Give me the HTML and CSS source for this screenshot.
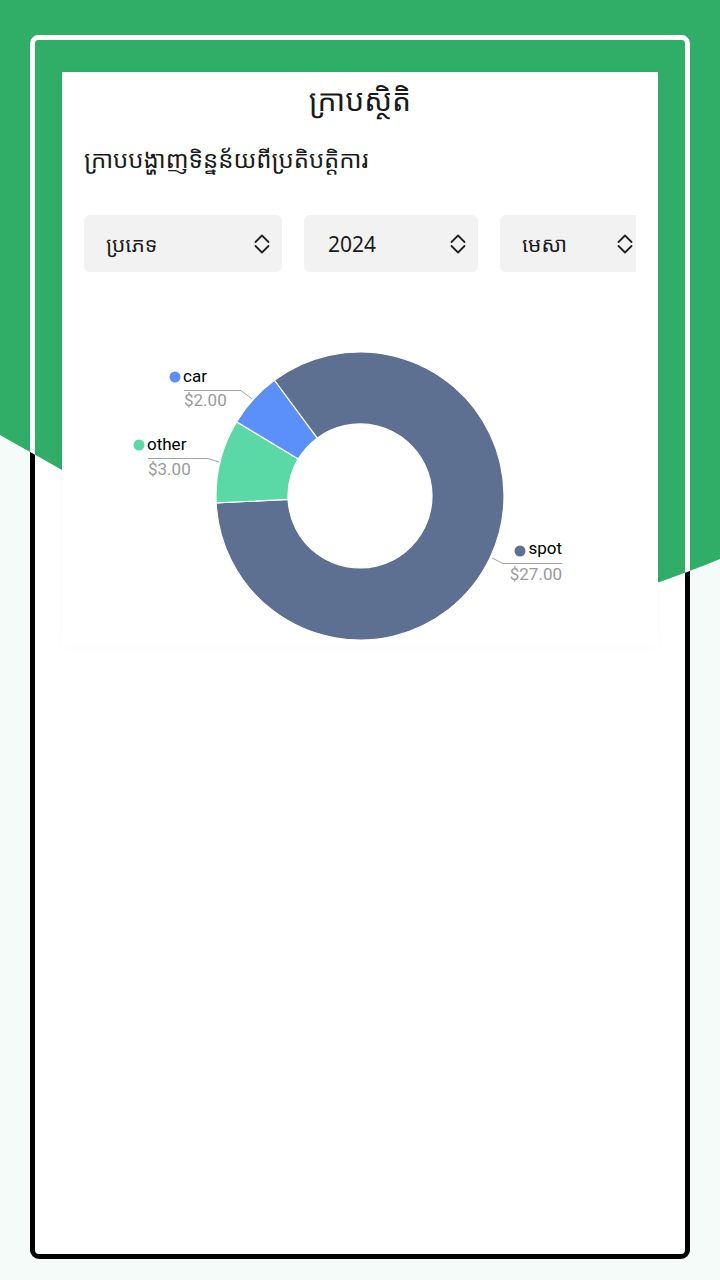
FILE: index.html
```html
<!DOCTYPE html>
<html lang="km">
<head>
<meta charset="utf-8">
<title>ក្រាបស្ថិតិ</title>
<link rel="stylesheet" href="styles.css">
</head>
<body>
<svg class="wave" width="720" height="720" viewBox="0 0 720 720" aria-hidden="true">
  <defs>
    <clipPath id="waveClip">
      <path d="M0 0 H720 V559 C400 690 300 603 0 435 Z"/>
    </clipPath>
  </defs>
  <path class="wave-fill" d="M0 0 H720 V559 C400 690 300 603 0 435 Z"/>
  <rect class="wave-stroke" x="32.5" y="37.5" width="655" height="1219" rx="6" clip-path="url(#waveClip)"/>
</svg>

<div class="frame">
  <div class="card">
    <h1 class="title">ក្រាបស្ថិតិ</h1>
    <h2 class="subtitle">ក្រាបបង្ហាញទិន្នន័យពីប្រតិបត្តិការ</h2>
    <div class="filters">
      <div class="select select-type">
        <span class="select-label">ប្រភេទ</span>
        <svg class="chev" width="18" height="24" viewBox="0 0 18 24"><path d="M2.5 10 L9 3.5 L15.5 10 M2.5 14 L9 20.5 L15.5 14"/></svg>
      </div>
      <div class="select select-year">
        <span class="select-label">2024</span>
        <svg class="chev" width="18" height="24" viewBox="0 0 18 24"><path d="M2.5 10 L9 3.5 L15.5 10 M2.5 14 L9 20.5 L15.5 14"/></svg>
      </div>
      <div class="select select-month">
        <span class="select-label">មេសា</span>
        <svg class="chev" width="18" height="24" viewBox="0 0 18 24"><path d="M2.5 10 L9 3.5 L15.5 10 M2.5 14 L9 20.5 L15.5 14"/></svg>
      </div>
    </div>
    <svg class="chart" width="596" height="355" viewBox="62 290 596 355">
      <g class="donut">
        <path class="seg-spot" d="M274.35 380.24 A144 144 0 1 1 216.17 502.91 L288.08 499.45 A72 72 0 1 0 317.17 438.12 Z"/>
        <path class="seg-other" d="M216.17 502.91 A144 144 0 0 1 236.57 421.84 L298.28 458.92 A72 72 0 0 0 288.08 499.45 Z"/>
        <path class="seg-car" d="M236.57 421.84 A144 144 0 0 1 274.35 380.24 L317.17 438.12 A72 72 0 0 0 298.28 458.92 Z"/>
      </g>
      <g class="labels">
        <polyline class="leader" points="184,390.5 241,390.5 252,399"/>
        <circle cx="175" cy="377" r="5.5" class="dot-car"/>
        <text x="183" y="382" class="lbl-name">car</text>
        <text x="184" y="406" class="lbl-val">$2.00</text>

        <polyline class="leader" points="148,458.5 208,458.5 219,462"/>
        <circle cx="139" cy="445" r="5.5" class="dot-other"/>
        <text x="147" y="450" class="lbl-name">other</text>
        <text x="148" y="475" class="lbl-val">$3.00</text>

        <polyline class="leader" points="492,558 503,563.5 562,563.5"/>
        <circle cx="520" cy="551" r="5.5" class="dot-spot"/>
        <text x="562" y="554" class="lbl-name end">spot</text>
        <text x="562" y="580" class="lbl-val end">$27.00</text>
      </g>
    </svg>
  </div>
</div>
</body>
</html>
```

FILE: styles.css
```css
html, body {
  margin: 0;
  padding: 0;
}

body {
  width: 720px;
  height: 1280px;
  background: #f4fbf8;
  font-family: "Noto Sans Khmer", "Khmer OS", "Khmer OS System", "Noto Serif Khmer", "Noto Sans", sans-serif;
  color: #1a1a1a;
  overflow: hidden;
  padding-top: 35px;
  box-sizing: border-box;
}

.wave {
  position: absolute;
  top: 0;
  left: 0;
  z-index: 1;
  pointer-events: none;
}

.wave-fill {
  fill: #30ae68;
}

.wave-stroke {
  fill: none;
  stroke: #ffffff;
  stroke-width: 5;
}

.frame {
  margin: 0 30px;
  height: 1224px;
  box-sizing: border-box;
  border: 5px solid #000;
  border-radius: 9px;
  background: #ffffff;
  padding: 32px 27px 0;
}

.card {
  position: relative;
  z-index: 2;
  background: #ffffff;
  height: 573px;
  padding: 0 22px;
  box-shadow: 0 2px 14px rgba(0, 0, 0, 0.018);
}

.title {
  margin: 0;
  font-size: 30px;
  font-weight: 400;
  line-height: 56px;
  text-align: center;
}

.subtitle {
  margin: 7px 0 0;
  font-size: 24px;
  font-weight: 400;
  line-height: 48px;
}

.filters {
  margin-top: 32px;
  display: flex;
  gap: 22px;
  overflow: hidden;
}

.select {
  flex: none;
  height: 57px;
  box-sizing: border-box;
  background: #f2f2f2;
  border-radius: 6px;
  display: flex;
  align-items: center;
  justify-content: space-between;
  padding: 0 11px 0 22px;
}

.select-type { width: 198px; }
.select-year { width: 174px; padding-left: 24px; }
.select-month { width: 145px; }

.select-label {
  font-size: 21px;
  line-height: 30px;
  color: #1a1a1a;
}

.chev path {
  fill: none;
  stroke: #222;
  stroke-width: 1.8;
  stroke-linecap: round;
  stroke-linejoin: round;
}

.chart {
  display: block;
  margin: 18px -22px 0;
}

.donut path {
  stroke: #ffffff;
  stroke-width: 1.2;
}

.seg-spot, .dot-spot { fill: #5d7092; }
.seg-other, .dot-other { fill: #5ad8a6; }
.seg-car, .dot-car { fill: #5b8ff9; }

.leader {
  fill: none;
  stroke: #a3a3a3;
  stroke-width: 1;
}

.lbl-name {
  font-family: Roboto, "Liberation Sans", sans-serif;
  font-size: 17px;
  fill: #000;
}

.lbl-val {
  font-family: Roboto, "Liberation Sans", sans-serif;
  font-size: 17px;
  fill: #9a9a9a;
}

.end {
  text-anchor: end;
}
```
